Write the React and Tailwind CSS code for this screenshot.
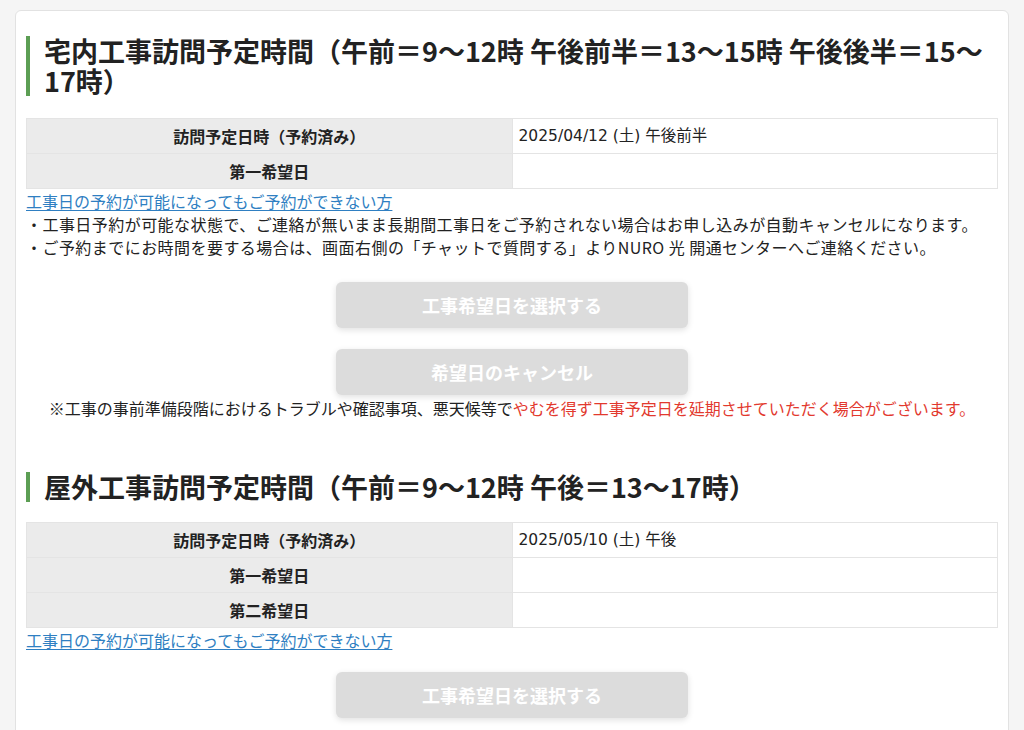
import React from "react";

const font = { fontFamily: '"Noto Sans CJK JP", "Noto Sans", sans-serif' };
const valFont = { fontFamily: '"DejaVu Sans", "Noto Sans CJK JP", sans-serif' };

function Heading({ children }) {
  return (
    <div className="flex">
      <div className="w-[4px] shrink-0 bg-[#5c9e54]" />
      <h2 className="pl-[14px] text-[27px] font-bold leading-[30px] text-[#222]">{children}</h2>
    </div>
  );
}

function Table({ rows }) {
  return (
    <table className="w-full border-collapse">
      <tbody>
        {rows.map(([h, v], i) => (
          <tr key={i} className="h-[35px]">
            <th className="w-1/2 border border-[#e4e4e4] bg-[#ebebeb] text-center text-[16px] font-bold text-[#222]">{h}</th>
            <td style={valFont} className="w-1/2 border border-[#e4e4e4] bg-white pl-[6px] pt-[2px] text-[15.5px] text-[#222]">{v}</td>
          </tr>
        ))}
      </tbody>
    </table>
  );
}

function Btn({ children }) {
  return (
    <div className="flex justify-center">
      <div className="flex h-[46px] w-[352px] items-center justify-center rounded-[6px] bg-[#dcdcdc] text-[18px] font-bold text-white shadow-[0_2px_6px_rgba(0,0,0,0.12)]">
        {children}
      </div>
    </div>
  );
}

function Link() {
  return (
    <a href="#" className="block text-[16px] leading-[24px] text-[#2f7fc2] underline underline-offset-2">
      工事日の予約が可能になってもご予約ができない方
    </a>
  );
}

export default function App() {
  return (
    <div style={font} className="min-h-[730px] bg-[#f5f5f5] px-[15px] pt-[10px] pb-[20px]">
      <div className="rounded-[6px] border border-[#e2e2e2] bg-white px-[10px] pt-[25px] pb-[30px]">
        <Heading>宅内工事訪問予定時間（午前＝9〜12時 午後前半＝13〜15時 午後後半＝15〜17時）</Heading>
        <div className="mt-[22px]">
          <Table rows={[["訪問予定日時（予約済み）", "2025/04/12 (土) 午後前半"], ["第一希望日", ""]]} />
        </div>
        <Link />
        <div className="text-[16px] leading-[23px] tracking-[0.45px] text-[#222]">
          <p>・工事日予約が可能な状態で、ご連絡が無いまま長期間工事日をご予約されない場合はお申し込みが自動キャンセルになります。</p>
          <p>・ご予約までにお時間を要する場合は、画面右側の「チャットで質問する」よりNURO 光 開通センターへご連絡ください。</p>
        </div>
        <div className="mt-[23px] flex flex-col gap-[21px]">
          <Btn>工事希望日を選択する</Btn>
          <Btn>希望日のキャンセル</Btn>
        </div>
        <p className="mt-[1px] text-center text-[16px] leading-[24px] text-[#222]">
          ※工事の事前準備段階におけるトラブルや確認事項、悪天候等で<span className="text-[#e2392e]">やむを得ず工事予定日を延期させていただく場合がございます。</span>
        </p>
        <div className="mt-[52px]">
          <Heading>屋外工事訪問予定時間（午前＝9〜12時 午後＝13〜17時）</Heading>
        </div>
        <div className="mt-[20px]">
          <Table rows={[["訪問予定日時（予約済み）", "2025/05/10 (土) 午後"], ["第一希望日", ""], ["第二希望日", ""]]} />
        </div>
        <Link />
        <div className="mt-[20px]">
          <Btn>工事希望日を選択する</Btn>
        </div>
      </div>
    </div>
  );
}
